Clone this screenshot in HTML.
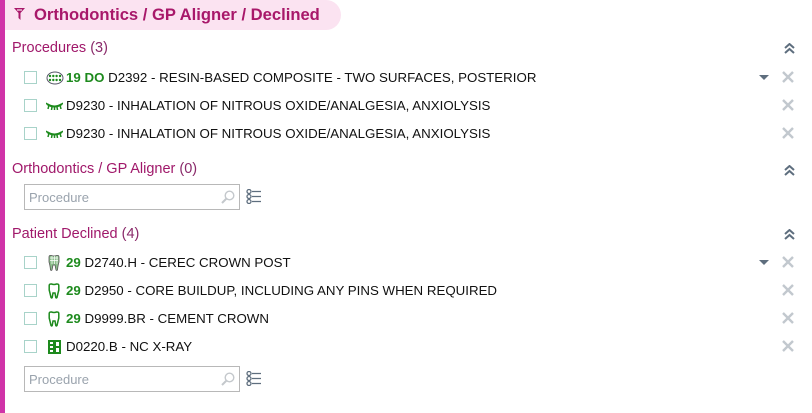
<!DOCTYPE html>
<html><head><meta charset="utf-8"><style>
*{margin:0;padding:0;box-sizing:border-box}
body{width:812px;height:413px;background:#fff;position:relative;overflow:hidden;font-family:"Liberation Sans",Arial,sans-serif}
.bar{position:absolute;left:0;top:0;width:5px;height:413px;background:#d033a8}
.pill{position:absolute;left:5px;top:0;width:336px;height:30px;background:#fbe3f1;border-radius:0 15px 15px 0}
.title{position:absolute;left:34px;top:5px;font-size:16.6px;font-weight:bold;color:#a8186a}
.sec{position:absolute;left:12px;font-size:14.5px;color:#a0186a}
.sec span{color:#8a2a6a}
.row{position:absolute;left:24px;height:16px;font-size:13.3px;color:#111;white-space:nowrap}
.cb{position:absolute;left:0;top:1px;width:13px;height:13px;border:1px solid #a8d3c9;background:#fff}
.txt{position:absolute;left:24px;top:0;line-height:16px}
.g{color:#1d8a1d;font-weight:bold}
.x{position:absolute;left:782px;width:12px;height:12px}
.dd{position:absolute;left:759px;width:0;height:0;border-left:5px solid transparent;border-right:5px solid transparent;border-top:5px solid #5e6e7e}
.srch{position:absolute;left:24px;width:216px;height:26px;border:1px solid #b8b8b8;background:#fff}
.srch span{position:absolute;left:4px;top:5px;font-size:13px;color:#9aa3ad}
.chev{position:absolute;left:784px}
</style></head><body>
<div class="bar"></div>
<div class="pill"></div>
<svg style="position:absolute;left:14px;top:8px" width="11" height="12" viewBox="0 0 11 12"><path d="M0 0H11L6.5 5V12L4.5 10V5Z" fill="#a8186a"/><path d="M3 2H8" stroke="#fbe3f1" stroke-width="1.2"/></svg>
<div class="title">Orthodontics / GP Aligner / Declined</div>

<div class="sec" style="top:40px">Procedures <span>(3)</span></div>
<svg class="chev" style="top:43px" width="11" height="11" viewBox="0 0 11 11"><path d="M1 5L5.5 1L10 5M1 10L5.5 6L10 10" fill="none" stroke="#5e6e7e" stroke-width="2"/></svg>

<div class="row" style="top:70px"><div class="cb"></div>
<svg style="position:absolute;left:22px;top:1px" width="18" height="14" viewBox="0 0 18 14"><ellipse cx="9" cy="7" rx="8" ry="6" fill="none" stroke="#556" stroke-width="1"/><g fill="#1d8a1d"><circle cx="4" cy="5" r="1.2"/><circle cx="7.3" cy="5" r="1.2"/><circle cx="10.6" cy="5" r="1.2"/><circle cx="14" cy="5" r="1.2"/><circle cx="4" cy="9" r="1.2"/><circle cx="7.3" cy="9" r="1.2"/><circle cx="10.6" cy="9" r="1.2"/><circle cx="14" cy="9" r="1.2"/></g></svg>
<div class="txt" style="left:42px"><span class="g">19 DO</span> D2392 - RESIN-BASED COMPOSITE - TWO SURFACES, POSTERIOR</div></div>
<div class="dd" style="top:75px"></div>
<svg class="x" style="top:71px" viewBox="0 0 12 12"><path d="M1 1L11 11M11 1L1 11" stroke="#c2c8ce" stroke-width="2.4"/></svg>

<div class="row" style="top:98px"><div class="cb"></div>
<svg style="position:absolute;left:22px;top:4px" width="17" height="8" viewBox="0 0 17 8"><path d="M1 2Q8.5 7 16 2" fill="none" stroke="#1d8a1d" stroke-width="2"/><path d="M3 3L2 7M6 5L5.5 8M8.5 5.5V8M11 5L11.5 8M14 3L15 7M1 2L0 1M16 2L17 1" stroke="#1d8a1d" stroke-width="1.5"/></svg>
<div class="txt" style="left:42px">D9230 - INHALATION OF NITROUS OXIDE/ANALGESIA, ANXIOLYSIS</div></div>
<svg class="x" style="top:99px" viewBox="0 0 12 12"><path d="M1 1L11 11M11 1L1 11" stroke="#c2c8ce" stroke-width="2.4"/></svg>

<div class="row" style="top:126px"><div class="cb"></div>
<svg style="position:absolute;left:22px;top:4px" width="17" height="8" viewBox="0 0 17 8"><path d="M1 2Q8.5 7 16 2" fill="none" stroke="#1d8a1d" stroke-width="2"/><path d="M3 3L2 7M6 5L5.5 8M8.5 5.5V8M11 5L11.5 8M14 3L15 7M1 2L0 1M16 2L17 1" stroke="#1d8a1d" stroke-width="1.5"/></svg>
<div class="txt" style="left:42px">D9230 - INHALATION OF NITROUS OXIDE/ANALGESIA, ANXIOLYSIS</div></div>
<svg class="x" style="top:127px" viewBox="0 0 12 12"><path d="M1 1L11 11M11 1L1 11" stroke="#c2c8ce" stroke-width="2.4"/></svg>

<div class="sec" style="top:161px">Orthodontics / GP Aligner <span>(0)</span></div>
<svg class="chev" style="top:165px" width="11" height="11" viewBox="0 0 11 11"><path d="M1 5L5.5 1L10 5M1 10L5.5 6L10 10" fill="none" stroke="#5e6e7e" stroke-width="2"/></svg>
<div class="srch" style="top:184px"><span>Procedure</span>
<svg style="position:absolute;left:196px;top:5px" width="14" height="14" viewBox="0 0 14 14"><circle cx="8.5" cy="5.5" r="4.3" fill="none" stroke="#c4c8cc" stroke-width="1.4"/><path d="M5.5 8.5L1 13" stroke="#c4c8cc" stroke-width="2"/></svg></div>
<svg style="position:absolute;left:246px;top:189px" width="15" height="15" viewBox="0 0 15 15"><g fill="none" stroke="#5e6e7e" stroke-width="1.3"><circle cx="3" cy="2.5" r="2"/><circle cx="3" cy="7.5" r="2"/><circle cx="3" cy="12.5" r="2"/><path d="M6 2.5H15M6 7.5H15M6 12.5H15"/></g></svg>

<div class="sec" style="top:226px">Patient Declined <span>(4)</span></div>
<svg class="chev" style="top:229px" width="11" height="11" viewBox="0 0 11 11"><path d="M1 5L5.5 1L10 5M1 10L5.5 6L10 10" fill="none" stroke="#5e6e7e" stroke-width="2"/></svg>

<div class="row" style="top:255px"><div class="cb"></div>
<svg style="position:absolute;left:24px;top:0" width="12" height="16" viewBox="0 0 12 16"><path d="M1 2Q1 0 3.5 0.5Q6 1.5 8.5 0.5Q11 0 11 2V7Q10 10 9.5 15Q8.5 16 8 15L7 10H5L4 15Q3.5 16 2.5 15Q2 10 1 7Z" fill="#8cc08c" stroke="#555" stroke-width="0.8"/><path d="M2 3H10M2 5.5H10M4 1V9M6.5 1V9M9 1V9" stroke="#fff" stroke-width="0.7"/></svg>
<div class="txt" style="left:42px"><span class="g">29</span> D2740.H - CEREC CROWN POST</div></div>
<div class="dd" style="top:260px"></div>
<svg class="x" style="top:256px" viewBox="0 0 12 12"><path d="M1 1L11 11M11 1L1 11" stroke="#c2c8ce" stroke-width="2.4"/></svg>

<div class="row" style="top:283px"><div class="cb"></div>
<svg style="position:absolute;left:24px;top:0" width="12" height="16" viewBox="0 0 12 16"><path d="M1.2 2.5Q1.2 0.8 3.5 1Q6 2 8.5 1Q10.8 0.8 10.8 2.5V7Q10 10 9 14.5Q8.3 15.5 7.8 14.5L7 10H5L4.2 14.5Q3.7 15.5 3 14.5Q2 10 1.2 7Z" fill="none" stroke="#1d8a1d" stroke-width="1.5"/></svg>
<div class="txt" style="left:42px"><span class="g">29</span> D2950 - CORE BUILDUP, INCLUDING ANY PINS WHEN REQUIRED</div></div>
<svg class="x" style="top:284px" viewBox="0 0 12 12"><path d="M1 1L11 11M11 1L1 11" stroke="#c2c8ce" stroke-width="2.4"/></svg>

<div class="row" style="top:311px"><div class="cb"></div>
<svg style="position:absolute;left:24px;top:0" width="12" height="16" viewBox="0 0 12 16"><path d="M1.2 2.5Q1.2 0.8 3.5 1Q6 2 8.5 1Q10.8 0.8 10.8 2.5V7Q10 10 9 14.5Q8.3 15.5 7.8 14.5L7 10H5L4.2 14.5Q3.7 15.5 3 14.5Q2 10 1.2 7Z" fill="none" stroke="#1d8a1d" stroke-width="1.5"/></svg>
<div class="txt" style="left:42px"><span class="g">29</span> D9999.BR - CEMENT CROWN</div></div>
<svg class="x" style="top:312px" viewBox="0 0 12 12"><path d="M1 1L11 11M11 1L1 11" stroke="#c2c8ce" stroke-width="2.4"/></svg>

<div class="row" style="top:339px"><div class="cb"></div>
<svg style="position:absolute;left:24px;top:1px" width="13" height="14" viewBox="0 0 13 14"><rect width="13" height="14" fill="#1d8a1d"/><g fill="#fff"><rect x="2" y="2" width="3" height="2"/><rect x="2" y="6" width="3" height="2"/><rect x="2" y="10" width="3" height="2"/><rect x="8" y="2" width="3" height="4"/><rect x="8" y="8" width="3" height="4"/></g></svg>
<div class="txt" style="left:42px">D0220.B - NC X-RAY</div></div>
<svg class="x" style="top:340px" viewBox="0 0 12 12"><path d="M1 1L11 11M11 1L1 11" stroke="#c2c8ce" stroke-width="2.4"/></svg>

<div class="srch" style="top:366px"><span>Procedure</span>
<svg style="position:absolute;left:196px;top:5px" width="14" height="14" viewBox="0 0 14 14"><circle cx="8.5" cy="5.5" r="4.3" fill="none" stroke="#c4c8cc" stroke-width="1.4"/><path d="M5.5 8.5L1 13" stroke="#c4c8cc" stroke-width="2"/></svg></div>
<svg style="position:absolute;left:246px;top:371px" width="15" height="15" viewBox="0 0 15 15"><g fill="none" stroke="#5e6e7e" stroke-width="1.3"><circle cx="3" cy="2.5" r="2"/><circle cx="3" cy="7.5" r="2"/><circle cx="3" cy="12.5" r="2"/><path d="M6 2.5H15M6 7.5H15M6 12.5H15"/></g></svg>
</body></html>
